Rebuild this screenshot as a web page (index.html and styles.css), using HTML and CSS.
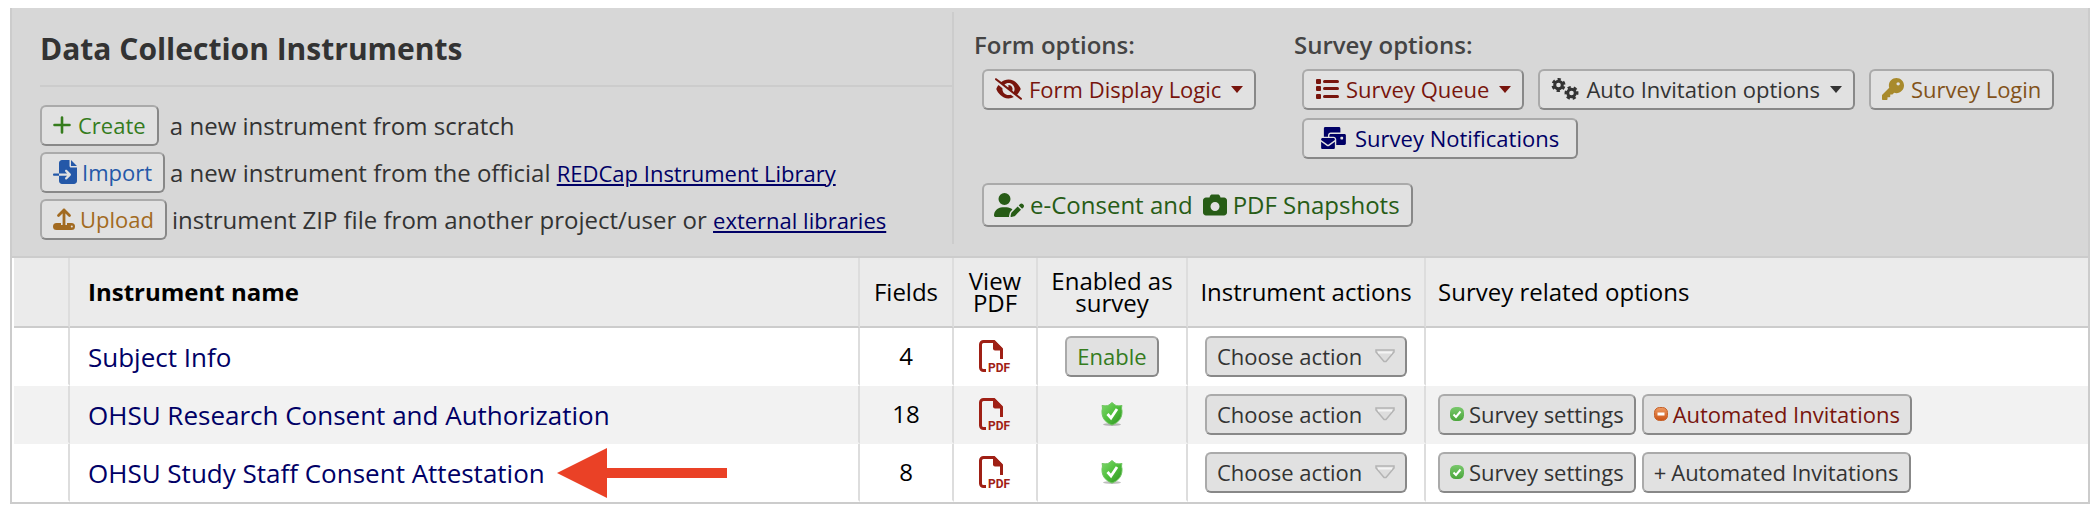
FILE: index.html
```
<!DOCTYPE html>
<html lang="en-us">
<head>
    <meta charset="UTF-8">
    <meta name="viewport" content="width=device-width, initial-scale=1.0">
    <title>Data Collection Instruments</title>
    <link rel="stylesheet" href="styles.css">
</head>
<body>
    <!-- shared icons -->
    <svg class="icon-defs" aria-hidden="true">
        <defs>
            <linearGradient id="shield-fill" x1="0" y1="0" x2="1" y2="1">
                <stop offset="0" stop-color="#7fd86c"/>
                <stop offset=".5" stop-color="#4fbf3c"/>
                <stop offset="1" stop-color="#2f8f22"/>
            </linearGradient>
            <linearGradient id="tick-fill" x1="0" y1="0" x2="0" y2="1">
                <stop offset="0" stop-color="#79c86c"/>
                <stop offset="1" stop-color="#4ba63c"/>
            </linearGradient>
            <linearGradient id="minus-fill" x1="0" y1="0" x2="0" y2="1">
                <stop offset="0" stop-color="#ee9a62"/>
                <stop offset="1" stop-color="#cc5214"/>
            </linearGradient>
            <symbol id="icon-pdf" viewBox="0 0 32 32">
                <path d="M7 30.500H4.500a3 3 0 0 1-3-3V4.500a3 3 0 0 1 3-3H15l7.500 7.500V19" fill="none" stroke="#9f2015" stroke-width="3"/>
                <path d="M14 1h2l7 7v2.500h-7a2 2 0 0 1-2-2z" fill="#9f2015"/>
                <text x="9" y="32" class="pdf-text">PDF</text>
            </symbol>
            <symbol id="icon-shield" viewBox="0 0 22 24">
                <ellipse cx="11" cy="22.500" rx="9" ry="1.500" fill="#000" opacity=".25"/>
                <path d="M11 .5 14 3c2 1 4 1 7 .5-.6 2-.6 3 0 5 .4 6-2 11.500-10 14.500C3 20 .6 14.500 1 8.500c.6-2 .6-3 0-5C4 4 6 4 8 3z" fill="url(#shield-fill)" stroke="#6fc660" stroke-width="1"/>
                <path d="m6.500 12 3.500 4 6-9" fill="none" stroke="#fff" stroke-width="2.800"/>
            </symbol>
            <symbol id="icon-tick" viewBox="0 0 14 14">
                <rect width="14" height="14" rx="5.500" fill="url(#tick-fill)"/>
                <path d="m3.500 7.500 2.500 2.500 4.500-5.500" fill="none" stroke="#fff" stroke-width="2"/>
            </symbol>
            <symbol id="icon-minus" viewBox="0 0 14 14">
                <rect x=".5" y=".5" width="13" height="13" rx="5" fill="url(#minus-fill)" stroke="#c4622c"/>
                <path d="M3.500 7h7" stroke="#fff" stroke-width="3"/>
            </symbol>
        </defs>
    </svg>

    <main class="instruments">
        <div class="panel">
            <div class="panel-left">
                <h1>Data Collection Instruments</h1>
                <div class="add-row">
                    <button type="button" class="btn green">
                        <svg width="20" height="18" viewBox="0 0 20 18"><path d="M9 1.500v15M1.500 9h15" stroke="currentColor" stroke-width="2.600" stroke-linecap="round"/></svg>
                        Create
                    </button>
                    <span>&nbsp;a new instrument from scratch</span>
                </div>
                <div class="add-row">
                    <button type="button" class="btn blue">
                        <svg width="24" height="24" viewBox="0 0 512 512"><path fill="currentColor" d="M128 64c0-35.300 28.700-64 64-64H352V128c0 17.700 14.300 32 32 32H512V448c0 35.300-28.700 64-64 64H192c-35.300 0-64-28.700-64-64V336H302.100l-39 39c-9.400 9.400-9.400 24.600 0 33.900s24.600 9.400 33.900 0l80-80c9.400-9.400 9.400-24.600 0-33.900l-80-80c-9.400-9.400-24.600-9.400-33.900 0s-9.400 24.600 0 33.900l39 39H128V64zm0 224v48H24c-13.300 0-24-10.700-24-24s10.700-24 24-24H128zM512 128H384V0L512 128z"/></svg>
                        Import
                    </button>
                    <span>a new instrument from the official <a href="#">REDCap Instrument Library</a></span>
                </div>
                <div class="add-row">
                    <button type="button" class="btn orange">
                        <svg width="22" height="22" viewBox="0 0 22 22">
                            <rect y="15" width="22" height="7" rx="3.500" fill="currentColor"/>
                            <path d="M11 12v5" stroke="#e1e1e1" stroke-width="6"/>
                            <path d="M11 2v15M5.500 7.500 11 2l5.500 5.500" fill="none" stroke="currentColor" stroke-width="2.800" stroke-linecap="round" stroke-linejoin="round"/>
                            <circle cx="18.800" cy="18.500" r="1" fill="#e1e1e1"/>
                        </svg>
                        Upload
                    </button>
                    <span>instrument ZIP file from another project/user or <a href="#">external libraries</a></span>
                </div>
            </div>

            <div class="panel-right">
                <div class="option-groups">
                    <div class="form-options">
                        <h2>Form options:</h2>
                        <div class="btn-group">
                            <button type="button" class="btn red" aria-haspopup="menu">
                                <svg width="27" height="22" viewBox="0 0 640 512"><path fill="currentColor" d="M38.800 5.100C28.400-3.100 13.300-1.200 5.100 9.200S-1.200 34.700 9.200 42.900l592 464c10.400 8.200 25.500 6.300 33.700-4.100s6.300-25.500-4.100-33.700L525.600 386.700c39.600-40.600 66.400-86.100 79.900-118.400c3.300-7.900 3.300-16.700 0-24.600c-14.900-35.700-46.200-87.700-93-131.100C465.500 68.800 400.800 32 320 32c-68.200 0-125 26.300-169.300 60.800L38.800 5.100zM223.100 149.500C248.600 126.200 282.700 112 320 112c79.500 0 144 64.500 144 144c0 24.900-6.300 48.300-17.400 68.700L408 294.500c8.400-19.300 10.600-41.400 4.800-63.300c-11.100-41.500-47.800-69.400-88.600-71.100c-5.800-.2-9.200 6.100-7.400 11.700c2.100 6.400 3.300 13.200 3.300 20.300c0 10.200-2.400 19.800-6.600 28.300l-90.300-70.800zM373 389.900c-16.400 6.500-34.300 10.100-53 10.100c-79.500 0-144-64.500-144-144c0-6.900 .5-13.600 1.400-20.200L83.100 161.500C60.300 191.200 44 220.800 34.500 243.700c-3.300 7.900-3.300 16.700 0 24.600c14.900 35.700 46.200 87.700 93 131.100C174.500 443.200 239.200 480 320 480c47.800 0 89.900-12.900 126.200-32.500L373 389.900z"/></svg>
                                Form Display Logic
                                <span class="caret"></span>
                            </button>
                        </div>
                    </div>
                    <div class="survey-options">
                        <h2>Survey options:</h2>
                        <div class="btn-group">
                            <button type="button" class="btn red" aria-haspopup="menu">
                                <svg width="24" height="22" viewBox="0 0 24 22" fill="currentColor">
                                    <rect x="1" y="1" width="5" height="5" rx="1"/><rect x="1" y="8" width="5" height="5" rx="1"/><rect x="1" y="16" width="5" height="5" rx="1"/>
                                    <rect x="8" y="2" width="16" height="3" rx="1.500"/><rect x="8" y="9" width="16" height="3" rx="1.500"/><rect x="8" y="17" width="16" height="3" rx="1.500"/>
                                </svg>
                                Survey Queue
                                <span class="caret"></span>
                            </button>
                            <button type="button" class="btn" aria-haspopup="menu">
                                <svg width="28" height="22" viewBox="0 0 28 22" fill="none" stroke="currentColor">
                                    <circle cx="7.500" cy="7" r="3.800" stroke-width="3"/>
                                    <circle cx="7.500" cy="7" r="5.800" stroke-width="2.400" stroke-dasharray="3.300 2.774" transform="rotate(14 7.500 7)"/>
                                    <circle cx="20.500" cy="15" r="3.800" stroke-width="3"/>
                                    <circle cx="20.500" cy="15" r="5.800" stroke-width="2.400" stroke-dasharray="3.300 2.774" transform="rotate(-16 20.500 15)"/>
                                </svg>
                                Auto Invitation options
                                <span class="caret"></span>
                            </button>
                            <button type="button" class="btn brown">
                                <svg class="key" width="22" height="22" viewBox="0 0 512 512"><path fill="currentColor" d="M336 352c97.200 0 176-78.800 176-176S433.200 0 336 0S160 78.800 160 176c0 18.700 2.900 36.800 8.300 53.700L7 391c-4.500 4.500-7 10.600-7 17v80c0 13.300 10.700 24 24 24h80c13.300 0 24-10.700 24-24V448h40c13.300 0 24-10.700 24-24V384h40c6.400 0 12.500-2.500 17-7l33.300-33.300c16.900 5.400 35 8.300 53.700 8.300zM376 96a40 40 0 1 1 0 80 40 40 0 1 1 0-80z"/></svg>
                                Survey Login
                            </button>
                            <button type="button" class="btn navy wide">
                                <svg width="25" height="22" viewBox="32 0 576 512"><path fill="currentColor" d="M128 0C110.300 0 96 14.300 96 32V224h96V192c0-35.300 28.700-64 64-64H480V32c0-17.700-14.300-32-32-32H128zM256 160c-17.700 0-32 14.300-32 32v32h96c35.300 0 64 28.700 64 64V416H576c17.700 0 32-14.300 32-32V192c0-17.700-14.300-32-32-32H256zm240 64h32c8.800 0 16 7.200 16 16v32c0 8.800-7.200 16-16 16H496c-8.800 0-16-7.200-16-16V240c0-8.800 7.200-16 16-16zM64 256c-17.700 0-32 14.300-32 32v13L187.100 415.900c1.400 1 3.100 1.600 4.900 1.600s3.500-.6 4.900-1.600L352 301V288c0-17.700-14.300-32-32-32H64zm288 84.800L216 441.600c-6.900 5.100-15.300 7.900-24 7.900s-17-2.800-24-7.900L32 340.800V480c0 17.700 14.300 32 32 32H320c17.700 0 32-14.300 32-32V340.800z"/></svg>
                                Survey Notifications
                            </button>
                        </div>
                    </div>
                </div>
                <div class="btn-group">
                    <button type="button" class="btn large darkgreen">
                        <svg width="30" height="24" viewBox="0 0 640 512"><path fill="currentColor" d="M224 256A128 128 0 1 0 224 0a128 128 0 1 0 0 256zm-45.700 48C79.800 304 0 383.800 0 482.300C0 498.700 13.300 512 29.700 512H322.800c-3.100-8.800-3.700-18.400-1.400-27.800l15-60.100c2.800-11.300 8.600-21.500 16.800-29.700l40.300-40.300c-32.100-31-75.700-50.100-123.900-50.100H178.300zm435.500-68.300c-15.600-15.600-40.900-15.600-56.600 0l-29.400 29.400 71 71 29.400-29.400c15.600-15.600 15.600-40.900 0-56.600l-14.400-14.400zM375.900 417c-4.100 4.100-7 9.200-8.400 14.900l-15 60.100c-1.400 5.500 .2 11.200 4.200 15.200s9.700 5.600 15.200 4.200l60.100-15c5.600-1.400 10.800-4.300 14.900-8.400L576.100 358.700l-71-71L375.900 417z"/></svg>
                        <span class="and">e-Consent and</span>
                        <svg width="24" height="24" viewBox="0 0 512 512"><path fill="currentColor" d="M149.100 64.800L138.700 96H64C28.700 96 0 124.700 0 160V416c0 35.300 28.700 64 64 64H448c35.300 0 64-28.700 64-64V160c0-35.300-28.700-64-64-64H373.300L362.900 64.800C356.400 45.200 338.100 32 317.400 32H194.600c-20.700 0-39 13.200-45.500 32.800zM256 192a96 96 0 1 1 0 192 96 96 0 1 1 0-192z"/></svg>
                        PDF Snapshots
                    </button>
                </div>
            </div>
        </div>

        <table>
            <colgroup>
                <col class="col-drag"><col class="col-name"><col class="col-fields"><col class="col-pdf"><col class="col-enabled"><col class="col-actions"><col>
            </colgroup>
            <thead>
                <tr>
                    <th></th>
                    <th class="name">Instrument name</th>
                    <th>Fields</th>
                    <th>View PDF</th>
                    <th>Enabled as survey</th>
                    <th>Instrument actions</th>
                    <th class="options">Survey related options</th>
                </tr>
            </thead>
            <tbody>
                <tr>
                    <td></td>
                    <td class="name"><a href="#">Subject Info</a></td>
                    <td>4</td>
                    <td><a href="#" aria-label="View PDF"><svg width="32" height="32"><use href="#icon-pdf"/></svg></a></td>
                    <td><button type="button" class="btn green">Enable</button></td>
                    <td><select class="btn" aria-label="Actions for Subject Info"><option>Choose action</option></select></td>
                    <td></td>
                </tr>
                <tr>
                    <td></td>
                    <td class="name"><a href="#">OHSU Research Consent and Authorization</a></td>
                    <td>18</td>
                    <td><a href="#" aria-label="View PDF"><svg width="32" height="32"><use href="#icon-pdf"/></svg></a></td>
                    <td><svg width="22" height="24"><use href="#icon-shield"/></svg></td>
                    <td><select class="btn" aria-label="Actions for OHSU Research Consent and Authorization"><option>Choose action</option></select></td>
                    <td class="options">
                        <div class="row-buttons">
                            <button type="button" class="btn"><svg width="14" height="14"><use href="#icon-tick"/></svg>Survey settings</button>
                            <button type="button" class="btn red"><svg width="14" height="14"><use href="#icon-minus"/></svg>Automated Invitations</button>
                        </div>
                    </td>
                </tr>
                <tr>
                    <td></td>
                    <td class="name">
                        <div class="pointed">
                            <a href="#">OHSU Study Staff Consent Attestation</a>
                            <svg width="170" height="50" viewBox="0 0 170 50"><path d="M0 25 50 0v20h120v10H50v20z" fill="#ea4126"/></svg>
                        </div>
                    </td>
                    <td>8</td>
                    <td><a href="#" aria-label="View PDF"><svg width="32" height="32"><use href="#icon-pdf"/></svg></a></td>
                    <td><svg width="22" height="24"><use href="#icon-shield"/></svg></td>
                    <td><select class="btn" aria-label="Actions for OHSU Study Staff Consent Attestation"><option>Choose action</option></select></td>
                    <td class="options">
                        <div class="row-buttons">
                            <button type="button" class="btn"><svg width="14" height="14"><use href="#icon-tick"/></svg>Survey settings</button>
                            <button type="button" class="btn"><span>+</span>Automated Invitations</button>
                        </div>
                    </td>
                </tr>
            </tbody>
        </table>
    </main>
</body>
</html>
```
FILE: styles.css
```
* {
    box-sizing: border-box;
}

body {
    margin: 0;
    background-color: #fff;
    color: #000;
    font-family: "Open Sans", sans-serif;
    font-size: 24px;
    line-height: 32px;
}

h1, h2 {
    margin: 0;
}

a {
    color: #000066;
}

svg {
    display: block;
    flex: none;
}

.icon-defs {
    position: absolute;
    width: 0;
    height: 0;
}

.pdf-text {
    font: bold 12px Roboto, "Open Sans", sans-serif;
    fill: #9f2015;
}

.instruments {
    margin: 8px 10px 14px;
    border: 2px solid #ccc;
    border-top: 0;
}

/* top panel */
.panel {
    display: flex;
    padding: 4px 0 12px;
    background-color: #d7d7d7;
    border-bottom: 2px solid #ccc;
    color: #333;
}

.panel-left {
    flex: none;
    width: 942px;
    padding: 17px 0 4px 28px;
    border-right: 2px solid #ccc;
}

.panel-left h1 {
    margin-bottom: 18px;
    padding-bottom: 16px;
    border-bottom: 2px solid #ccc;
    font-size: 30px;
    line-height: 40px;
}

.add-row {
    display: flex;
    align-items: center;
    gap: 5px;
}

.add-row + .add-row {
    margin-top: 6px;
}

.add-row a {
    font-size: 22px;
}

.panel-right {
    flex: 1;
    padding: 17px 20px 0;
}

.panel-right h2 {
    margin-bottom: 8px;
    color: #444;
    font-size: 24px;
    font-weight: 600;
}

.option-groups {
    display: flex;
    margin-bottom: 24px;
}

.form-options {
    flex: none;
    width: 320px;
}

.btn-group {
    display: flex;
    flex-wrap: wrap;
    gap: 8px 14px;
    padding-left: 8px;
}

/* buttons */
.btn {
    display: inline-flex;
    align-items: center;
    gap: 5px;
    height: 41px;
    padding: 0 11px 1px;
    border: 2px solid;
    border-color: #aaa #888 #888 #aaa;
    border-radius: 6px;
    background-color: #e1e1e1;
    color: #333;
    font-family: inherit;
    font-size: 22px;
    line-height: 30px;
    white-space: nowrap;
}

.btn-group .btn {
    gap: 7px;
}

.btn-group .wide {
    gap: 9px;
    padding: 0 17px 1px;
}

.btn-group .large {
    gap: 6px;
    height: 44px;
    padding: 0 11px 0 10px;
    font-size: 24px;
}

.btn .and {
    margin-right: 4px;
}

.green { color: #357c1d; }
.darkgreen { color: #275c16; }
.blue { color: #2458a8; }
.orange { color: #a26a20; }
.red { color: #78150d; }
.brown { color: #82521a; }
.navy { color: #000066; }
.key { color: #a88a2c; }

.caret {
    margin-left: 3px;
    border: 6px solid transparent;
    border-top: 7px solid;
    border-bottom: 0;
}

select.btn {
    appearance: none;
    background-image: url("data:image/svg+xml,%3Csvg xmlns='http://www.w3.org/2000/svg' width='20' height='14'%3E%3Cpath d='M1 1h18v2l-8 9.500h-2L1 3z' fill='%23ddd' stroke='%23b4b4b4' stroke-width='1.500'/%3E%3Cpath d='M3 3.500h14' stroke='%23f4f4f4' stroke-width='2'/%3E%3C/svg%3E");
    background-repeat: no-repeat;
    background-position: right 10px center;
}

/* instruments list */
table {
    width: 100%;
    border-collapse: separate;
    border-spacing: 0;
    border-left: 2px solid #fff;
    table-layout: fixed;
}

.col-drag { width: 56px; }
.col-name { width: 790px; }
.col-fields { width: 94px; }
.col-pdf { width: 84px; }
.col-enabled { width: 150px; }
.col-actions { width: 238px; }

th {
    height: 70px;
    padding: 0 8px;
    border-right: 2px solid #ddd;
    border-bottom: 2px solid #ccc;
    background-color: #ebebeb;
    font-weight: normal;
    line-height: 22px;
}

td {
    height: 58px;
    padding: 0;
    border-right: 2px solid #ddd;
    border-bottom: 2px solid #fff;
    text-align: center;
}

tr:nth-child(even) td {
    background-color: #f2f2f2;
    border-bottom-color: #f2f2f2;
}

th:last-child, td:last-child {
    border-right: 0;
}

td svg {
    margin: 0 auto;
}

td .btn {
    padding: 0 10px 1px;
    vertical-align: middle;
}

td select.btn {
    padding: 0 42px 1px 10px;
}

.name {
    padding-left: 18px;
    text-align: left;
}

th.name {
    font-weight: bold;
}

td.name {
    padding-top: 2px;
    font-size: 26px;
}

.name a {
    text-decoration: none;
}

.options {
    padding-left: 12px;
    text-align: left;
}

.row-buttons {
    display: flex;
    gap: 6px;
}

.row-buttons svg {
    margin: 0;
}

.pointed {
    display: flex;
    align-items: center;
    gap: 12px;
}

.pointed svg {
    margin: 0;
}
```
